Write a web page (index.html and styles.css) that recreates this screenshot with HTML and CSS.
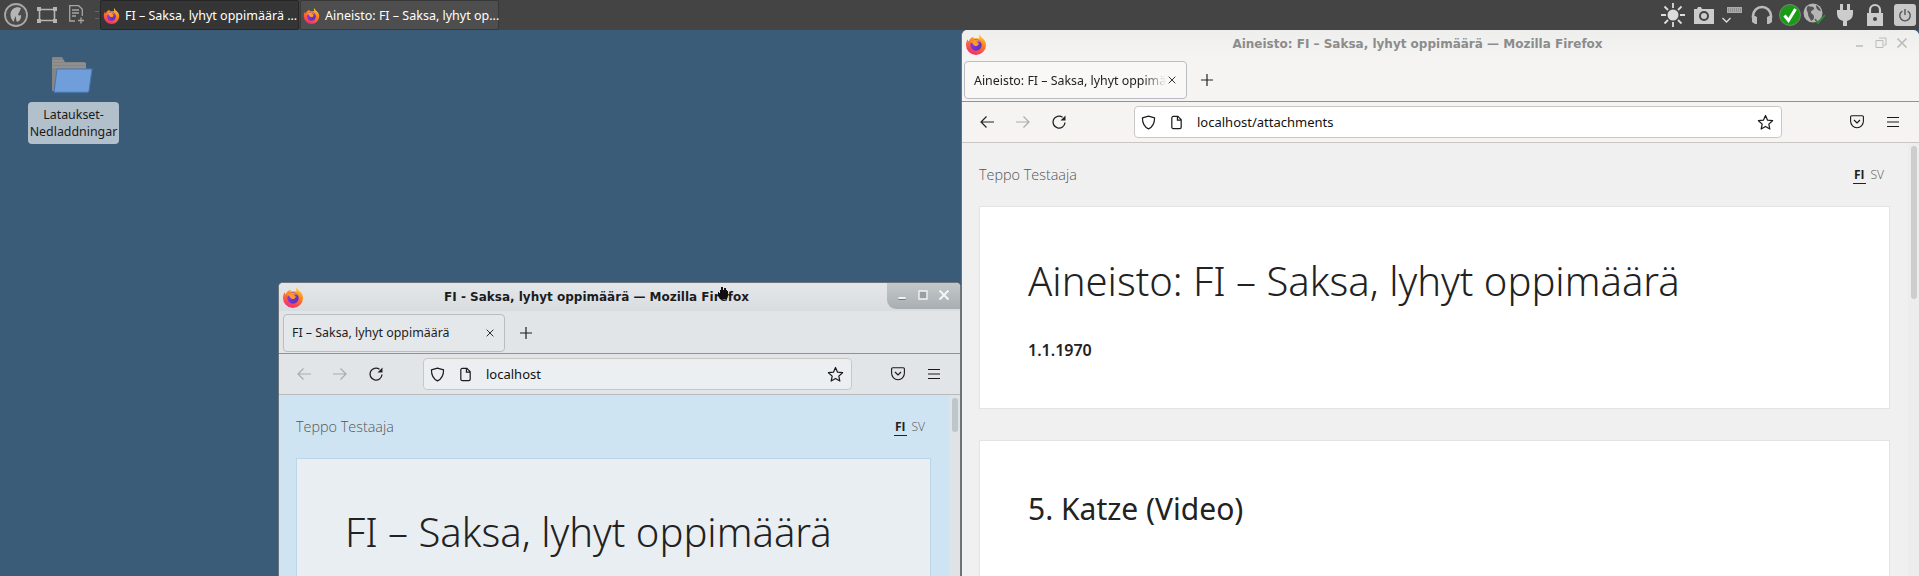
FILE: index.html
```html
<!DOCTYPE html>
<html lang="fi">
<head>
<meta charset="utf-8">
<title>Desktop</title>
<link rel="stylesheet" href="styles.css">
</head>
<body>
<svg class="defs" width="0" height="0" aria-hidden="true">
  <defs>
    <linearGradient id="fxA" x1="0.7" y1="0" x2="0.3" y2="1"><stop offset="0" stop-color="#ffd02e"/><stop offset="0.45" stop-color="#ff7a1f"/><stop offset="1" stop-color="#f0267a"/></linearGradient>
    <linearGradient id="fxB" x1="0" y1="0" x2="1" y2="1"><stop offset="0" stop-color="#a03bd8"/><stop offset="1" stop-color="#4a2fc4"/></linearGradient>
    <symbol id="firefox" viewBox="0 0 22 22">
      <path d="M14.500 1c.3 1.600 1 2.500 2.500 3.700 2.600 2 4 4.200 4 7.300a10 10 0 0 1-20 0c0-2.500.8-4.600 1.700-5.800.1 1 .5 1.800 1.100 2.300C4.500 6 6.500 4 9 3.700c-.6.800-.8 1.300-.7 1.800 1.800-.3 4.600 0 6.200-.1C14 4 14 2.500 14.500 1z" fill="url(#fxA)"/>
      <circle cx="11" cy="12" r="5.700" fill="url(#fxB)"/>
      <path d="M5 9.500c1.500-2.400 4.500-3.200 7-2.700 1.800.4 3.300 1.700 3.600 3-1.200-1.200-3-1.500-4.400-1 1.800.4 2.600 1.200 2.400 2.400-.3 1.400-2 2-3.400 1.700-1.700-.4-2.800-2-3-3.400-.7.200-1.500.2-2.200 0z" fill="#ff9a2a"/>
    </symbol>
    <symbol id="back" viewBox="0 0 16 16"><path d="M15 8H2M7.500 2.500 2 8l5.500 5.500" fill="none" stroke="currentColor" stroke-width="1.200"/></symbol>
    <symbol id="forward" viewBox="0 0 16 16"><path d="M1 8H14M8.500 2.500 14 8l-5.500 5.500" fill="none" stroke="currentColor" stroke-width="1.200"/></symbol>
    <symbol id="reload" viewBox="0 0 16 16"><path d="M14 8.500A6 6 0 1 1 11.500 3.200" fill="none" stroke="currentColor" stroke-width="1.300"/><path d="M14.500 1.500v5h-5z" fill="currentColor"/></symbol>
    <symbol id="shield" viewBox="0 0 16 16"><path d="M8 1.200 14.500 3c0 6-1.800 9.800-6.500 11.800C3.300 12.800 1.500 9 1.500 3z" fill="none" stroke="currentColor" stroke-width="1.300" stroke-linejoin="round"/></symbol>
    <symbol id="page" viewBox="0 0 16 16"><path d="M3 3a1.500 1.500 0 0 1 1.500-1.500h5L13 5v8a1.500 1.500 0 0 1-1.500 1.500h-7A1.500 1.500 0 0 1 3 13zM9 1.500V5.500h4" fill="none" stroke="currentColor" stroke-width="1.300"/></symbol>
    <symbol id="star" viewBox="0 0 18 18"><path d="M9 1.600 11.200 6.500l5.300.6-4 3.600 1.100 5.200L9 13.200l-4.600 2.700 1.100-5.200-4-3.600 5.300-.6z" fill="none" stroke="currentColor" stroke-width="1.300" stroke-linejoin="round"/></symbol>
    <symbol id="pocket" viewBox="0 0 14 14"><path d="M1.800.7h10.400A1.200 1.200 0 0 1 13.400 2v4.300a6.400 6.400 0 0 1-12.800 0V2A1.200 1.200 0 0 1 1.800.7z" fill="none" stroke="currentColor" stroke-width="1.100"/><path d="M4 5l3 3 3-3" fill="none" stroke="currentColor" stroke-width="1.200"/></symbol>
    <symbol id="menu" viewBox="0 0 12 12"><path d="M0 1.500h12M0 6h12M0 10.500h12" stroke="currentColor" stroke-width="1.200"/></symbol>
    <symbol id="close" viewBox="0 0 12 12"><path d="M2 2l8 8M10 2l-8 8" stroke="currentColor" stroke-width="1.100"/></symbol>
    <symbol id="plus" viewBox="0 0 14 14"><path d="M7 1v12M1 7h12" stroke="currentColor" stroke-width="1.200"/></symbol>
  </defs>
</svg>

<main class="desktop">
  <header class="taskbar">
    <svg class="launch launch-menu" viewBox="0 0 24 24"><circle cx="12" cy="12" r="11" fill="#4c4c4c" stroke="#a8a8a8" stroke-width="1.800"/><path d="M17 5c-5-2-10 1-10.500 6-.3 3 1 6 3.500 8 0-3 1-4 1.500-6 .5 2 .5 4 1.500 6 3-1 4.500-4 4-7-1 .5-2 .5-3 0 .5-2 2-4 3-7z" fill="#b5b5b5"/></svg>
    <svg class="launch launch-view" viewBox="0 0 20 16"><path d="M2.500 2.500h15v11h-15z" fill="none" stroke="#b5b5b5" stroke-width="1.600"/><path d="M0 0h4v4H0zM16 0h4v4h-4zM0 12h4v4H0zM16 12h4v4h-4z" fill="#b5b5b5"/></svg>
    <svg class="launch launch-note" viewBox="0 0 17 20"><path d="M6 16H.7V.7h9l3.600 3.600V11M3 5h7M3 8h7M3 11h4" fill="none" stroke="#a5a5a5" stroke-width="1.300"/><path d="M12 12.500v6M9 15.500h6" stroke="#a5a5a5" stroke-width="1.300"/></svg>
    <span class="grip"></span>
    <div class="task task-active">
      <svg class="task-icon"><use href="#firefox"/></svg>
      <span class="task-label">FI – Saksa, lyhyt oppimäärä ...</span>
    </div>
    <div class="task">
      <svg class="task-icon"><use href="#firefox"/></svg>
      <span class="task-label">Aineisto: FI – Saksa, lyhyt op...</span>
    </div>
    <div class="tray">
      <svg class="tray-sun" viewBox="0 0 26 26"><circle cx="13" cy="13" r="5.500" fill="#ddd"/><path d="M13 1v5M13 20v5M1 13h5M20 13h5M4.500 4.500l3.500 3.500M18 18l3.500 3.500M21.500 4.500 18 8M8 18l-3.500 3.500" stroke="#ddd" stroke-width="1.800"/></svg>
      <svg class="tray-cam" viewBox="0 0 22 18"><path d="M1 3h3l1-2h3l1 2h12v15H1z" fill="#ccc"/><circle cx="11" cy="10" r="5" fill="#444"/><circle cx="11" cy="10" r="3" fill="#ccc"/></svg>
      <svg class="tray-kbd" viewBox="0 0 24 24"><path d="M6 4h15v6H6z" fill="#aaa"/><path d="M7 6h13M7 8h13" stroke="#666" stroke-width=".8" stroke-dasharray="1 1"/><path d="M1.500 15l4 4 4-4" fill="none" stroke="#ddd" stroke-width="1.300"/></svg>
      <svg class="tray-head" viewBox="0 0 22 20"><path d="M2 13v-2a9 9 0 0 1 18 0v2" fill="none" stroke="#bbb" stroke-width="2.600"/><path d="M1 11h3l2 1v7H4l-3-2zM21 11h-3l-2 1v7h2l3-2z" fill="#bbb"/></svg>
      <svg class="tray-ok" viewBox="0 0 22 22"><circle cx="11" cy="11" r="10.500" fill="#1b9a16" stroke="#8a8a8a" stroke-width=".8"/><path d="M5.500 11.500l4 5L16.500 5" fill="none" stroke="#fff" stroke-width="3"/></svg>
      <svg class="tray-globe" viewBox="0 0 24 24"><circle cx="10" cy="10" r="9.500" fill="#b5b5b5"/><path d="M5 3c3 1 5 0 6 2s-3 2-3 4 3 2 3 5-2 3-3 4c-1-3-3-4-3-7S2 7 5 3zM13 2c2 1 4 3 5 6-2 0-3-1-4-2s-1-3-1-4z" fill="#555"/><path d="M12 16l3 4 7-8" fill="none" stroke="#2e8b3a" stroke-width="1.800"/></svg>
      <svg class="tray-plug" viewBox="0 0 20 24"><path d="M5 1h3v6H5zM12 1h3v6h-3z" fill="#ccc"/><path d="M2 7h16v4a8 8 0 0 1-6 7v5H8v-5a8 8 0 0 1-6-7z" fill="#ccc"/></svg>
      <svg class="tray-lock" viewBox="0 0 20 24"><path d="M5 11V7a5 5 0 0 1 10 0v4" fill="none" stroke="#ccc" stroke-width="2.200"/><path d="M2 10h16v13H2z" fill="#ccc"/><circle cx="10" cy="16" r="2" fill="#444"/></svg>
      <span class="tray-power"><svg viewBox="0 0 16 16"><path d="M5 3.500a6 6 0 1 0 6 0" fill="none" stroke="#555" stroke-width="1.600"/><path d="M8 1v7" stroke="#555" stroke-width="1.600"/></svg></span>
    </div>
  </header>

  <div class="shortcut">
    <svg class="folder" viewBox="0 0 42 36">
      <path d="M1 1a1 1 0 0 1 1-1h9l3 5h19a2 2 0 0 1 2 2v27H1z" fill="#858585"/>
      <path d="M1 4h12M1 7h34M1 10h34" stroke="#9a9a9a"/>
      <path d="M6 12h35l-3 22a1.500 1.500 0 0 1-1.500 1.200H3z" fill="#6f9edb" stroke="#4a78b2"/>
    </svg>
    <span class="shortcut-label">Lataukset-<br>Nedladdningar</span>
  </div>

  <section class="win win-back">
    <div class="titlebar">
      <svg class="win-logo"><use href="#firefox"/></svg>
      <span class="win-title">Aineisto: FI – Saksa, lyhyt oppimäärä — Mozilla Firefox</span>
      <div class="win-btns">
        <svg viewBox="0 0 12 12"><path d="M2 9h7" stroke="#bbb" stroke-width="1.600"/></svg>
        <svg viewBox="0 0 12 12"><path d="M4 1h7v7H9M1 3.500h7v7H1z" fill="none" stroke="#bbb"/></svg>
        <svg viewBox="0 0 12 12"><path d="M1.500 1.500l9 9M10.500 1.500l-9 9" stroke="#bbb" stroke-width="1.600"/></svg>
      </div>
    </div>
    <div class="tabstrip">
      <div class="tab tab-wide">
        <span class="tab-label tab-fade">Aineisto: FI – Saksa, lyhyt oppimä</span>
        <svg class="tab-x"><use href="#close"/></svg>
      </div>
      <svg class="new-tab"><use href="#plus"/></svg>
    </div>
    <div class="toolbar">
      <svg class="tb back-on"><use href="#back"/></svg>
      <svg class="tb tb-dim"><use href="#forward"/></svg>
      <svg class="tb"><use href="#reload"/></svg>
      <div class="urlbar urlbar-wide">
        <svg class="u-icon"><use href="#shield"/></svg>
        <svg class="u-icon"><use href="#page"/></svg>
        <span class="url">localhost/attachments</span>
        <svg class="u-star"><use href="#star"/></svg>
      </div>
      <svg class="tb-pocket"><use href="#pocket"/></svg>
      <svg class="tb-menu"><use href="#menu"/></svg>
    </div>
    <div class="page">
      <div class="scroll"><div class="thumb"></div></div>
      <div class="page-top">
        <span class="user">Teppo Testaaja</span>
        <span class="langs"><b>FI</b><span>SV</span></span>
      </div>
      <article class="card card-head">
        <h1>Aineisto: FI – Saksa, lyhyt oppimäärä</h1>
        <p class="date">1.1.1970</p>
      </article>
      <article class="card card-item">
        <h2>5. Katze (Video)</h2>
      </article>
    </div>
  </section>

  <section class="win win-front">
    <div class="titlebar">
      <svg class="win-logo"><use href="#firefox"/></svg>
      <span class="win-title">FI - Saksa, lyhyt oppimäärä — Mozilla Firefox</span>
      <div class="win-btns">
        <svg viewBox="0 0 12 12"><path d="M2.500 9h7" stroke="#f2f3f4" stroke-width="2"/><path d="M2.500 10.500h7" stroke="#777" stroke-width="1"/></svg>
        <svg viewBox="0 0 12 12"><path d="M2 2h8v8H2z" fill="#9a9fa3" stroke="#f2f3f4" stroke-width="1.400"/></svg>
        <svg viewBox="0 0 12 12"><path d="M1.500 1.500l9 9M10.500 1.500l-9 9" stroke="#f2f3f4" stroke-width="2.200"/></svg>
      </div>
      <svg class="cursor" viewBox="0 0 12 12"><path d="M1 5v4l2 3h7l1-3V4h-1V3H9V1H7v2H6V0H4v3H3v3H2V5z" fill="#111"/></svg>
    </div>
    <div class="tabstrip">
      <div class="tab tab-narrow">
        <span class="tab-label">FI – Saksa, lyhyt oppimäärä</span>
        <svg class="tab-x"><use href="#close"/></svg>
      </div>
      <svg class="new-tab"><use href="#plus"/></svg>
    </div>
    <div class="toolbar">
      <svg class="tb tb-dim"><use href="#back"/></svg>
      <svg class="tb tb-dim"><use href="#forward"/></svg>
      <svg class="tb"><use href="#reload"/></svg>
      <div class="urlbar urlbar-narrow">
        <svg class="u-icon"><use href="#shield"/></svg>
        <svg class="u-icon"><use href="#page"/></svg>
        <span class="url">localhost</span>
        <svg class="u-star"><use href="#star"/></svg>
      </div>
      <svg class="tb-pocket"><use href="#pocket"/></svg>
      <svg class="tb-menu"><use href="#menu"/></svg>
    </div>
    <div class="page">
      <div class="scroll"><div class="thumb"></div></div>
      <div class="page-top">
        <span class="user">Teppo Testaaja</span>
        <span class="langs"><b>FI</b><span>SV</span></span>
      </div>
      <article class="card card-front">
        <h1>FI – Saksa, lyhyt oppimäärä</h1>
      </article>
    </div>
  </section>
</main>
</body>
</html>
```

FILE: styles.css
```css
* { box-sizing: border-box; }
html, body { margin: 0; padding: 0; }
body { width: 1919px; height: 576px; overflow: hidden; font-family: "Noto Sans", sans-serif; }
.defs { position: absolute; }
svg { display: block; flex: none; }

.desktop { position: relative; width: 1919px; height: 576px; overflow: hidden; background: #3a5c78; }

/* taskbar */
.taskbar { display: flex; align-items: center; height: 30px; background: #444; color: #fff; }
.launch-menu { width: 24px; height: 24px; margin-left: 4px; }
.launch-view { width: 20px; height: 16px; margin-left: 9px; }
.launch-note { width: 17px; height: 20px; margin-left: 12px; }
.grip { width: 4px; height: 8px; margin-left: 9px; border-top: 1px solid #666; border-bottom: 1px solid #666; }
.task { display: flex; align-items: center; width: 199px; height: 30px; margin-left: 1px; padding-left: 2px; gap: 5px; background: #4e4e4e; border: 1px solid #383838; border-radius: 2px; font-size: 12.500px; }
.task-active { background: #353535; border-color: #262626; }
.task-icon { width: 17px; height: 17px; }
.task-label { white-space: nowrap; }
.tray { display: flex; align-items: center; margin-left: auto; padding-right: 3px; }
.tray-sun { width: 26px; height: 26px; }
.tray-cam { width: 22px; height: 18px; margin-left: 7px; }
.tray-kbd { width: 24px; height: 24px; margin-left: 6px; }
.tray-head { width: 22px; height: 20px; margin-left: 6px; }
.tray-ok { width: 22px; height: 22px; margin-left: 6px; }
.tray-globe { width: 24px; height: 24px; margin-left: 2px; }
.tray-plug { width: 20px; height: 24px; margin-left: 8px; }
.tray-lock { width: 20px; height: 24px; margin-left: 10px; }
.tray-power { display: flex; align-items: center; justify-content: center; width: 22px; height: 22px; margin-left: 9px; background: #c8c8c8; border-radius: 3px; }
.tray-power svg { width: 14px; height: 14px; }

/* desktop shortcut */
.shortcut { position: absolute; left: 28px; top: 57px; width: 91px; display: flex; flex-direction: column; align-items: center; gap: 9px; }
.folder { width: 42px; height: 36px; margin-right: 3px; }
.shortcut-label { width: 91px; height: 42px; padding-top: 4px; background: #b2c0cc; border-radius: 4px; color: #1a1a1a; font-size: 12.400px; line-height: 17px; text-align: center; }

/* windows */
.win { position: absolute; display: flex; flex-direction: column; overflow: hidden; }
.win-back { left: 961px; top: 30px; width: 958px; height: 546px; background: #f5f4f2; border-left: 1px solid #707070; border-radius: 6px 6px 0 0; color: #222; }
.win-front { left: 278px; top: 282px; width: 683px; height: 294px; background: #e1e5e8; border: 1px solid #6e7378; border-bottom: 0; border-radius: 5px 5px 0 0; color: #1c1c1c; }

.titlebar { position: relative; display: flex; align-items: center; justify-content: center; height: 28px; flex: none; padding-right: 46px; }
.win-logo { position: absolute; left: 3px; top: 3px; width: 22px; height: 22px; }
.win-title { font-family: "DejaVu Sans", sans-serif; font-weight: 700; font-size: 12px; white-space: nowrap; }
.win-back .titlebar { background: linear-gradient(#eeeeec, #f5f4f2); }
.win-back .win-title { color: #8c8c8c; }
.win-front .titlebar { background: linear-gradient(#e4e7e9, #d9dde0); }
.win-btns { position: absolute; right: 0; top: 0; height: 100%; display: flex; align-items: center; gap: 9px; padding: 0 11px 2px 12px; }
.win-btns svg { width: 12px; height: 12px; }
.win-front .win-btns { height: 26px; background: linear-gradient(#c3c8cb, #a9aeb2); border-bottom-left-radius: 9px; padding: 0 10px 2px 9px; }
.cursor { position: absolute; left: 438px; top: 4px; width: 12px; height: 12px; }

.tabstrip { display: flex; align-items: center; height: 44px; flex: none; padding: 3px 0 2px 2px; border-bottom: 1px solid #8f9193; }
.win-front .tabstrip { height: 43px; padding-left: 4px; }
.tab { display: flex; align-items: center; justify-content: space-between; height: 38px; padding: 0 9px 0 8px; border: 1px solid #b9bcc2; border-radius: 4px; font-size: 12.400px; }
.tab-wide { width: 223px; background: #f9f8f7; padding-left: 9px; }
.tab-narrow { width: 222px; background: #e4e8eb; }
.tab-label { white-space: nowrap; }
.tab-fade { -webkit-mask-image: linear-gradient(90deg, #000 88%, transparent); mask-image: linear-gradient(90deg, #000 88%, transparent); }
.tab-x { width: 10px; height: 10px; }
.new-tab { width: 14px; height: 14px; margin-left: 14px; }
.win-back .new-tab { margin-left: 13px; }

.toolbar { display: flex; align-items: center; height: 41px; flex: none; padding: 0 20px 0 17px; color: #1a1a1a; border-bottom: 1px solid #cac7c2; }
.win-front .toolbar { border-bottom-color: #b9babb; }
.tb { width: 16px; height: 16px; margin-right: 20px; color: #222; }
.tb.tb-dim { color: #a9abad; }
.urlbar { display: flex; align-items: center; flex: none; height: 32px; padding: 0 7px 0 6px; border: 1px solid #c9c7c4; border-radius: 4px; background: #fff; font-size: 13px; }
.urlbar-wide { width: 648px; margin-left: 47px; }
.urlbar-narrow { width: 429px; margin-left: 19px; background: #ebeff2; }
.u-icon { width: 15px; height: 15px; margin-right: 13px; color: #1c1c1c; }
.url { white-space: nowrap; color: #111; }
.u-star { width: 17px; height: 17px; margin-left: auto; color: #1c1c1c; }
.tb-pocket { width: 14px; height: 14px; }
.tb-menu { width: 12px; height: 12px; margin-left: 23px; }
.win-back .tb-pocket { margin-left: 68px; }
.win-front .tb-pocket { margin-left: 39px; }

.page { position: relative; flex: 1; padding: 0 29px 0 17px; background: #f0f0f0; color: #2a2a2a; font-family: "Open Sans", sans-serif; overflow: hidden; }
.win-front .page { background: #cfe4f2; }
.scroll { position: absolute; right: 0; top: 0; bottom: 0; width: 11px; background: #ededed; }
.thumb { width: 6px; height: 153px; margin: 3px 0 0 3px; background: #cdcdcd; border-radius: 3px; }
.win-front .scroll { background: #dfe3e6; }
.win-front .thumb { height: 34px; margin-top: 3px; background: #bcc6cb; }

.page-top { display: flex; align-items: center; justify-content: space-between; height: 63px; padding-right: 6px; }
.user { font-weight: 300; font-size: 14.400px; color: #555; }
.langs { display: flex; gap: 5px; font-size: 12px; color: #555; font-weight: 300; }
.langs b { font-weight: 700; color: #222; border-bottom: 1px solid #222; padding: 0 1px; line-height: 17px; }
.langs span { line-height: 17px; }

.card { background: #fff; border: 1px solid #e3e3e3; padding: 0 48px; font-family: "Noto Sans", sans-serif; }
.card-head { height: 203px; }
.card-item { margin-top: 31px; height: 300px; }
.card-front { height: 300px; background: #e9eef2; border-color: #bcd6e6; }
h1 { margin: 0; font-weight: 300; font-size: 40px; line-height: 54px; white-space: nowrap; color: #222; }
.card-head h1 { padding-top: 47px; }
.card-front h1 { padding-top: 46px; }
h2 { margin: 0; padding-top: 48px; font-weight: 400; font-size: 30px; line-height: 40px; color: #222; }
.date { margin: 31px 0 0; font-weight: 600; font-size: 16px; line-height: 22px; color: #222; }
```
